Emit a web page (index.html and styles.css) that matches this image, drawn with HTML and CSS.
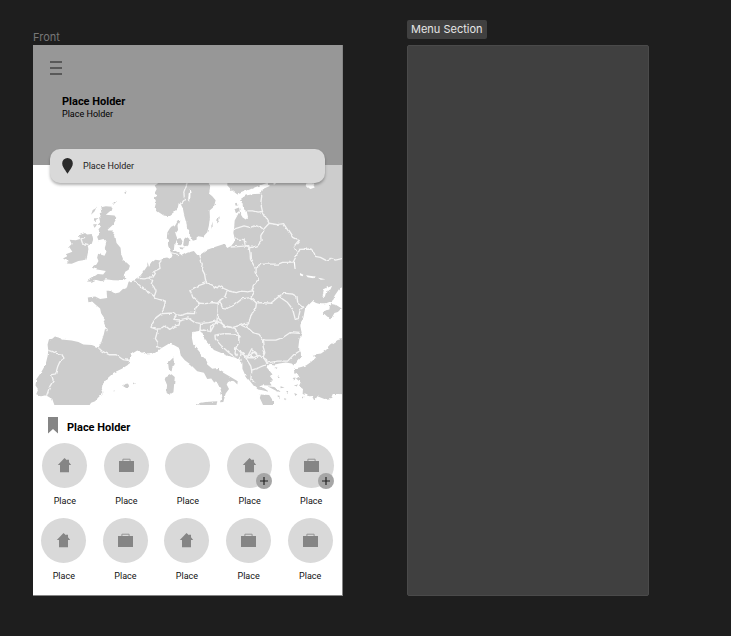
FILE: index.html
```html
<!DOCTYPE html>
<html lang="en">
<head>
<meta charset="utf-8">
<meta name="viewport" content="width=device-width, initial-scale=1">
<title>Front</title>
<link rel="stylesheet" href="styles.css">
</head>
<body>
<svg class="sprite" aria-hidden="true">
  <symbol id="house" viewBox="0 0 15 16"><path d="M7.500 1 10 3.300V2.700h2v2.600L14.200 8H12v7.200H3V8H.8Z" fill="#858585"/></symbol>
  <symbol id="case" viewBox="0 0 15 16"><path d="M3.900 4.500V2.200h7.200v2.300" fill="none" stroke="#949494"/><path d="M0 4h15v11H0Z" fill="#858585"/></symbol>
</svg>
<main class="canvas">
  <section class="board front">
    <h2 class="board-name">Front</h2>
    <div class="phone">
      <header class="top">
        <button class="menu" aria-label="Menu"><svg viewBox="0 0 12 14"><path d="M0 1h12M0 7h12M0 13h12" stroke="#454545" stroke-width="1.300"/></svg></button>
        <div class="intro">
          <h1 class="title">Place Holder</h1>
          <p class="subtitle">Place Holder</p>
        </div>
        <label class="search">
          <svg class="pin" viewBox="0 0 11 16"><path d="M5.500 0a5.300 5.300 0 0 1 5.300 5.400C10.800 9 7.500 12 5.500 15.800 3.500 12 .2 9 .2 5.400A5.300 5.300 0 0 1 5.500 0Z" fill="#2b2b2b"/></svg>
          <input class="search-box" type="text" value="Place Holder" aria-label="Search">
        </label>
      </header>
      <svg class="map" viewBox="3 -42 930 717" preserveAspectRatio="xMidYMid slice" role="img" aria-label="Map of Europe">
        <defs><filter id="rough" filterUnits="userSpaceOnUse" x="-20" y="-60" width="980" height="760"><feTurbulence type="fractalNoise" baseFrequency=".06" numOctaves="2" seed="4"/><feDisplacementMap in="SourceGraphic" scale="9" xChannelSelector="R" yChannelSelector="G"/></filter></defs>
        <g filter="url(#rough)" transform="translate(2 -1)">
        <g fill="#ccc">
          <!-- continent -->
          <path d="M68 690V675L62 658 48 650 42 647 30 650 14 644 20 630 12 618 14 600 28 580 42 555 48 530 50 515 48 495 52 480 62 478 70 471 84 474 90 480 120 483 140 488 155 495 180 497 200 504 208 490 216 465 220 447 227 460 222 444 214 425 217 415 208 402 205 388 190 375 181 367 170 369 168 355 190 352 205 359 226 356 224 335 232 335 245 344 262 340 272 330 285 325 290 308 305 303 325 290 340 270 345 262 347 249 351 264 357 253 365 246 370 242 385 244 388 238 405 235 415 240 421 230 418 222 411 210 407 195 412 184 404 178 406 160 415 146 428 142 436 128 442 125 436 140 438 153 430 164 436 180 427 193 425 214 435 218 450 229 465 221 485 216 495 228 507 225 525 212 550 203 575 195 585 207 597 200 605 190 607 182 603 165 605 148 607 125 615 110 623 95 630 115 640 122 647 115 643 98 633 90 630 75 623 62 640 50 665 46 685 45 693 30 712 22 705 12 670 25 645 35 615 47 598 34 585 20 585-60H960V325L925 340 905 351 897 368 880 375 865 375 850 371 840 365 830 375 817 390 812 415 805 425 803 440 807 460 800 480 797 505 805 520 804 535 795 545 784 558 777 552 760 549 740 552 727 555 712 553 702 563 710 572 720 585 712 589 722 602 712 604 717 618 705 618 690 617 680 621 695 626 711 637 690 632 677 630 665 620 653 605 640 590 630 568 630 550 625 545 610 535 590 530 565 520 545 512 530 495 517 480 511 461 500 455 480 458 479 475 483 495 500 515 515 535 525 555 540 568 560 565 560 572 595 592 616 605 615 615 605 605 590 602 583 615 590 628 580 642 573 667 563 668 570 650 565 630 555 610 545 608 537 597 525 598 515 580 495 575 475 555 458 542 446 528 440 505 425 497 410 493 395 502 380 510 370 520 350 525 338 518 330 520 316 513 296 525 292 542 290 555 270 568 245 580 225 598 212 615 210 628 215 638 198 655 190 665 178 669 165 690Z"/>
          <!-- Scandinavia -->
          <path d="M368-60V10L378 14 368 20 374 31 367 44 377 50 368 56 372 72 368 87 377 98 395 110 410 112 425 100 437 87 440 72 446 76 452 88 455 103 462 128 465 150 474 155 473 170 482 185 493 182 494 171 512 174 525 160 530 140 533 115 532 95 545 84 550 64 540 52 530 44 534 24 528 10V-60Z"/>
          <!-- Great Britain, Ireland and northern isles -->
          <path d="M208 85 222 82 240 84 237 95 222 108 248 110 254 118 244 137 228 152 225 158 240 158 250 170 254 192 266 206 268 226 273 238 272 248 284 250 294 260 290 272 280 278 275 292 284 298 272 304 244 303 222 300 208 306 192 302 180 308 165 307 184 294 198 285 214 286 222 276 196 271 180 266 194 256 200 246 196 236 199 224 218 230 224 218 219 206 224 190 215 180 200 184 196 173 205 164 200 151 208 142 196 140 205 130 202 116 204 103 212 99Z"/>
          <path d="M142 169 160 162 166 167 180 165 184 182 180 194 168 200 170 214 164 242 140 246 120 254 102 253 108 246 94 238 108 231 102 226 122 218 112 203 120 195 114 182 132 184 145 180Z"/>
          <path d="M184 90 195 84 188 98 178 108ZM190 118 200 118 194 126 186 124ZM184 136 196 136 190 145ZM244 72 256 68 248 78ZM276 40 284 34 280 46ZM222 198 226 188 228 198Z"/>
          <!-- Baltic islands -->
          <path d="M433 184 445 177 451 187 447 199 437 198ZM456 180 463 173 472 180 469 198 460 207 453 198ZM441 204 455 206 450 212ZM556 118 562 112 561 126 554 134ZM538 140 541 128 541 150ZM606 91 620 86 622 95 610 105ZM608 75 616 72 618 79 610 81Z"/>
          <!-- Mediterranean islands -->
          <path d="M408 550 420 538 424 534 425 552 418 573 410 568ZM400 594 418 584 428 592 424 638 410 646 403 638 405 616 398 600ZM273 619 283 612 292 620 285 627ZM303 609 312 612 308 614ZM244 634 249 632 247 636ZM492 672 520 667 555 665 551 690H492ZM685 645 710 646 724 667 715 690H698L690 672 682 655ZM705 620 725 622 748 639 732 634ZM785 640 794 644 788 649ZM744 620 756 624 744 626ZM760 635 768 637 764 643ZM780 595 789 594 786 602ZM784 617 795 614 793 621ZM842 648 857 644 848 660ZM735 650 742 652 738 658ZM755 655 762 658 756 662ZM730 563 735 565 730 569ZM735 587 742 590 737 593ZM808 655 815 650 814 656Z"/>
          <!-- Crimea -->
          <path d="M896 374 910 377 927 388 915 398 905 401 896 417 884 412 870 400 880 393 890 391 891 381Z"/>
          <!-- Anatolia -->
          <path d="M960 468 933 477 915 482 895 495 880 512 865 522 840 526 850 534 836 547 820 558 803 563 784 568 785 582 802 590 790 597 804 608 799 620 811 628 810 643 830 650 850 648 875 658 895 655 900 643 917 643 960 645Z"/>
        </g>
        <g fill="#fff">
          <path d="M820 14 838 10 846 26 833 31 824 24ZM802 282 812 287 810 291 802 288ZM870 350 874 330 898 320 893 331 881 336 876 353ZM820 288 846 292 842 297 825 294ZM856 296 878 300 864 302ZM722 10 732 12 724 19ZM475 45 472 30 468 58 474 64Z"/>
          <path d="M783 248 786 270 789 270 787 248Z"/>
          <path d="M904 352 920 328 960 310V350Z"/>
        </g>
        <g class="borders">
          <!-- Iberia, France and the Low Countries -->
          <path d="M50 512 62 516 74 522 90 524 98 538 84 548 78 562 72 583 60 585 65 603 54 622 45 648M200 505 212 516 233 526 253 526 273 540 292 543M306 304 320 316 330 326 350 339 364 349 370 357 400 366 397 380 388 403 372 415 360 435 357 444 372 449 375 460 370 478 378 490 376 502 388 508M316 296 334 299 350 296 362 304 358 314 366 324 372 336 367 350M352 293 363 294 370 283 365 278 384 268 382 252 388 244"/>
          <!-- Germany, Switzerland and Austria -->
          <path d="M388 403 410 402 428 402 432 410 425 420 443 422 441 437 430 440 413 450 400 440 390 448 374 449M426 405 445 408 465 402 487 403 488 390 502 372 482 355 474 333 497 320 520 312M443 422 468 416 488 430 505 432 508 455M502 225 510 255 508 267 517 285 521 310M414 220 427 223 438 227"/>
          <!-- Central Europe -->
          <path d="M521 310 540 318 555 326 560 320 575 328 590 335 612 340 625 336 645 338 660 335 662 320 678 300 668 280 668 266 654 240 653 222 649 200 625 202 595 204M474 332 472 330M584 335 578 352 561 365 556 372 540 370 520 373 502 372M562 365 570 385 585 387 605 378 630 358 655 355 665 340 658 330M558 370 557 400 554 424 530 430 508 432M558 415 575 440 600 445 625 437 650 430 655 410 670 385 672 371 655 355"/>
          <!-- Baltic states and eastern borders -->
          <path d="M608 180 635 182 638 197 653 207 676 200 686 187 685 170 694 155 687 146 670 140 655 146 635 141 607 150M645 96 660 96 675 100 690 98 685 75 688 45M690 98 700 115 710 133 694 150M710 133 735 137 753 134 765 153 780 175 800 185 788 200 785 205 795 223 782 249 750 250 737 255 700 255 685 256 670 268M795 223 802 211 835 210 845 220 847 232 863 235 880 244 895 238 908 243 935 237"/>
          <!-- Danube countries -->
          <path d="M672 371 692 370 715 372 735 355 752 342 780 345 793 352 795 368 813 384 803 390 797 418 788 420 780 390 765 370 748 358 736 348M650 430 640 443 625 437M640 440 662 460 680 465 690 480 700 482 730 482 750 475 772 460 802 462M690 480 692 502 697 520 692 533 700 545 705 555M705 550 735 545 765 545 782 527 803 513"/>
          <!-- Balkans -->
          <path d="M505 432 503 455 513 452 535 457 550 430 558 425M535 457 535 440 560 428M555 425 580 440 608 447 618 465 625 475 605 464 575 463 548 467 550 480 568 500 590 520 608 533M618 465 620 490 610 505 630 520 645 532 665 518 675 528 665 535 654 530M610 505 608 520 615 530M630 520 643 540 655 560 658 575 655 600 665 607M643 534 660 535 680 528 702 540 705 553 680 564 658 572M610 507 618 511 626 520 623 539 627 544M645 532 658 508 674 523"/>
          <!-- Ireland and the northern fjords -->
          <path d="M160 175 148 180 152 192 170 197M460-42 465 12 455 40 457 62 447 76M468 58 473 70"/>
        </g>
        </g>
      </svg>
      <section class="places">
        <h2 class="places-title"><svg class="bookmark" viewBox="0 0 10 17"><path d="M0 0h10v16.500L5 12 0 16.500Z" fill="#858585"/></svg>Place Holder</h2>
        <div class="grid">
          <button class="place"><span class="disc"><svg class="icon"><use href="#house"/></svg></span>Place</button>
          <button class="place"><span class="disc"><svg class="icon"><use href="#case"/></svg></span>Place</button>
          <button class="place"><span class="disc"></span>Place</button>
          <button class="place"><span class="disc"><svg class="icon"><use href="#house"/></svg><svg class="plus" viewBox="0 0 16 16"><path d="M4 8h8M8 4v8" stroke="#222" stroke-width="1.200"/></svg></span>Place</button>
          <button class="place"><span class="disc"><svg class="icon"><use href="#case"/></svg><svg class="plus" viewBox="0 0 16 16"><path d="M4 8h8M8 4v8" stroke="#222" stroke-width="1.200"/></svg></span>Place</button>
        </div>
        <div class="grid second">
          <button class="place"><span class="disc"><svg class="icon"><use href="#house"/></svg></span>Place</button>
          <button class="place"><span class="disc"><svg class="icon"><use href="#case"/></svg></span>Place</button>
          <button class="place"><span class="disc"><svg class="icon"><use href="#house"/></svg></span>Place</button>
          <button class="place"><span class="disc"><svg class="icon"><use href="#case"/></svg></span>Place</button>
          <button class="place"><span class="disc"><svg class="icon"><use href="#case"/></svg></span>Place</button>
        </div>
      </section>
    </div>
  </section>
  <section class="board">
    <h2 class="board-name tag">Menu Section</h2>
    <div class="panel"></div>
  </section>
</main>
</body>
</html>
```
FILE: styles.css
```css
* { box-sizing: border-box; }
body { margin: 0; background: #1e1e1e; font-family: Inter, "Liberation Sans", sans-serif; color: #111; }
h1, h2, p { margin: 0; }
button { border: 0; padding: 0; background: none; font: inherit; color: inherit; }
svg { display: block; }
.sprite { position: absolute; width: 0; height: 0; }

.canvas {
  min-height: 100vh;
  display: grid;
  grid-template-columns: 310fr 242fr;
  column-gap: 64px;
  padding: 20px 82px 40px 33px;
}
.board { display: grid; grid-template-rows: 19px 1fr; row-gap: 6px; min-width: 0; }
.front { grid-template-rows: 25px 1fr; row-gap: 0; }
.board-name { align-self: end; font-size: 11px; line-height: 16px; font-weight: 400; color: #777; }
.tag { justify-self: start; padding: 0 4px; line-height: 19px; color: #e6e6e6; background: #404040; border-radius: 2px; }
.panel { background: #404040; border: 1px solid #4a4a4a; border-radius: 2px; }

.phone { display: flex; flex-direction: column; background: #fff; border: solid #858585; border-width: 0 1px 1px 0; font-family: Roboto, "Liberation Sans", sans-serif; }
.top { position: relative; padding: 16px 17px 0; background: #979797; }
.menu { display: block; }
.menu svg { width: 12px; height: 14px; }
.intro { margin: 20px 12px 0; color: #000; }
.title { font-size: 11px; line-height: 14px; font-weight: 700; }
.subtitle { font-size: 9px; line-height: 10px; }
.search {
  display: flex;
  align-items: center;
  gap: 10px;
  height: 34px;
  margin: 30px 0 -18px;
  padding: 0 12px;
  background: #d9d9d9;
  border-radius: 10px;
  box-shadow: 0 2px 3px rgba(0, 0, 0, .3);
}
.pin { width: 11px; height: 16px; }
.search-box { flex: 1; min-width: 0; border: 0; padding: 0; background: none; font: inherit; font-size: 9px; line-height: 12px; color: #222; outline: 0; }

.map { width: 100%; height: auto; flex: 1; min-height: 0; }
.borders { fill: none; stroke: #f4f4f4; stroke-width: 4; stroke-linejoin: round; }

.places { padding: 12px 0 13px; }
.places-title { display: flex; align-items: flex-end; gap: 9px; height: 18px; margin: 0 15px 8px; font-size: 11px; line-height: 14px; font-weight: 700; color: #000; }
.bookmark { width: 10px; height: 17px; align-self: flex-start; }
.grid { display: grid; grid-template-columns: repeat(5, 1fr); margin: 0 0 0 1px; }
.second { margin: 11px 1px 0 0; }
.place { display: flex; flex-direction: column; align-items: center; gap: 7px; font-size: 9px; line-height: 12px; }
.disc { position: relative; display: flex; justify-content: center; width: 45px; height: 45px; padding-top: 14px; border-radius: 50%; background: #d9d9d9; }
.icon { width: 15px; height: 16px; }
.plus { position: absolute; right: 0; bottom: -1px; width: 16px; height: 16px; border-radius: 50%; background: #a6a6a6; }
```
